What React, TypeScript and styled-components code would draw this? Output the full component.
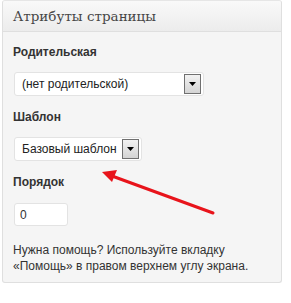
import React from "react";
import styled, { createGlobalStyle } from "styled-components";

const Global = createGlobalStyle`
  html, body { margin: 0; padding: 0; background: #fff; }
  body { font-family: "Liberation Sans", Arial, sans-serif; }
`;

const Page = styled.div`
  position: relative;
  width: 291px;
  height: 303px;
  padding: 0 0 0 2px;
  box-sizing: border-box;
`;

const Box = styled.div`
  width: 280px;
  box-sizing: border-box;
  border: 1px solid #dfdfdf;
  border-top-color: #e6e6e6;
  border-radius: 3px;
  background: #f5f5f5;
  overflow: hidden;
`;

const Header = styled.div`
  height: 31px;
  box-sizing: border-box;
  padding: 7px 10px 0 10px;
  background: linear-gradient(to bottom, #f9f9f9, #ececec);
  border-bottom: 1px solid #dfdfdf;
  font-family: "DejaVu Serif", Georgia, serif;
  font-size: 13.5px;
  color: #464646;
`;

const Body = styled.div`
  padding: 9px 10px 8px 10px;
  display: flex;
  flex-direction: column;
  align-items: flex-start;
`;

const Label = styled.div`
  font-weight: bold;
  font-size: 12px;
  color: #333;
  margin: 4px 0 13px 0;
`;

const Select = styled.div<{ $w: number }>`
  width: ${(p) => p.$w}px;
  height: 24px;
  box-sizing: border-box;
  background: #fff;
  border: 1px solid #e3e3e3;
  border-radius: 3px;
  display: flex;
  align-items: center;
  justify-content: space-between;
  padding: 0 2px 0 7px;
  margin: 0 0 10px 1px;
  font-size: 12px;
  color: #222;
  white-space: nowrap;
`;

const DropBtn = styled.div`
  width: 17px;
  height: 20px;
  box-sizing: border-box;
  border: 1px solid #707070;
  background: linear-gradient(to bottom, #f2f2f2, #d4d4d4);
  display: flex;
  align-items: center;
  justify-content: center;
`;

const Input = styled.div`
  width: 54px;
  height: 23px;
  box-sizing: border-box;
  background: #fff;
  border: 1px solid #e3e3e3;
  border-radius: 3px;
  padding: 0 5px;
  display: flex;
  align-items: center;
  font-size: 12px;
  color: #333;
  margin: 1px 0 16px 1px;
`;

const Help = styled.p`
  margin: 0;
  font-size: 12px;
  line-height: 16px;
  color: #333;
`;

const Arrow = styled.svg`
  position: absolute;
  left: 0;
  top: 0;
  pointer-events: none;
`;

const Tri = () => (
  <svg width="7" height="4" viewBox="0 0 7 4">
    <path d="M0 0 H7 L3.5 4 Z" fill="#000" />
  </svg>
);

export default function App() {
  return (
    <Page>
      <Global />
      <Box>
        <Header>Атрибуты страницы</Header>
        <Body>
          <Label>Родительская</Label>
          <Select $w={190}>
            <span>(нет родительской)</span>
            <DropBtn><Tri /></DropBtn>
          </Select>
          <Label>Шаблон</Label>
          <Select $w={128}>
            <span>Базовый шаблон</span>
            <DropBtn><Tri /></DropBtn>
          </Select>
          <Label>Порядок</Label>
          <Input>0</Input>
          <Help>
            Нужна помощь? Используйте вкладку
            <br />
            «Помощь» в правом верхнем углу экрана.
          </Help>
        </Body>
      </Box>
      <Arrow width="291" height="303" viewBox="0 0 291 303">
        <line x1="213" y1="213" x2="112" y2="176" stroke="#e8141b" strokeWidth="3" strokeLinecap="round" />
        <path d="M102 172 L117 170 L112 182 Z" fill="#e8141b" />
      </Arrow>
    </Page>
  );
}
